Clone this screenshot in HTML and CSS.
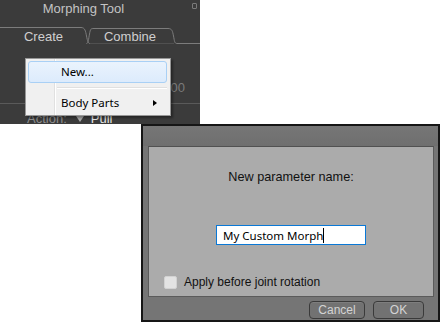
FILE: index.html
```html
<!DOCTYPE html>
<html lang="en">

<head>
    <meta charset="UTF-8" />
    <title>Morphing Tool</title>
    <link rel="stylesheet" href="styles.css">
</head>

<body>
    <div class="panel">
        <div class="panel-head">
            Morphing Tool
            <span class="grip"></span>
        </div>
        <div class="tabs">
            <svg class="tab-lines" width="200" height="17" viewBox="0 0 200 17">
                <path d="M0 0.5 H81 C85 0.5 85.5 4 86.5 9 C87.5 14 88 16.5 90 16.5" />
                <path d="M86.5 16.5 C88.5 16.5 88.5 12 89.5 7 C90.5 2 90.5 1.5 94 1.5 H168 C172 1.5 172.5 4 173.5 9 C174.5 14 174.5 16.5 177 16.5 H200" />
                <path class="under" d="M90 16.5 H174" />
            </svg>
            <span class="tab tab-active">Create</span>
            <span class="tab">Combine</span>
        </div>
        <div class="panel-body">
            <div class="value-row">0.000</div>
            <div class="action-row">
                <span class="action-label">Action:</span>
                <span class="action-arrow"></span>
                <span class="action-value">Pull</span>
            </div>
        </div>

        <div class="menu">
            <div class="menu-item menu-item-hover">New...</div>
            <div class="menu-sep"></div>
            <div class="menu-item">Body Parts <span class="menu-arrow"></span></div>
        </div>
    </div>

    <div class="dialog">
        <div class="dialog-title"></div>
        <div class="dialog-body">
            <p class="prompt">New parameter name:</p>
            <div class="name-input">My Custom Morph<span class="caret"></span></div>
            <label class="check">
                <span class="check-box"></span>
                Apply before joint rotation
            </label>
        </div>
        <div class="dialog-buttons">
            <button class="btn btn-cancel">Cancel</button>
            <button class="btn btn-ok">OK</button>
        </div>
    </div>
</body>

</html>
```

FILE: styles.css
```css
html {
    -webkit-font-smoothing: antialiased;
    font-family: "Liberation Sans", Arial, sans-serif;
    box-sizing: border-box;
}

*,
*:before,
*:after {
    box-sizing: inherit;
}

body {
    margin: 0;
    background: #fff;
}

/* tool panel */
.panel {
    position: relative;
    width: 200px;
    height: 124px;
    background: #3b3b3b;
    color: #c4c4c4;
    font-size: 13px;
}

.panel-head {
    position: relative;
    height: 27px;
    line-height: 17px;
    padding-right: 33px;
    text-align: center;
}

.grip {
    position: absolute;
    right: 3px;
    top: 3px;
    width: 5px;
    height: 6px;
    border: 1px solid #7a7a7a;
    border-radius: 1px;
}

.tabs {
    position: relative;
    display: flex;
    height: 17px;
}

.tab-lines {
    position: absolute;
    left: 0;
    top: 0;
}

.tab-lines path {
    fill: none;
    stroke: #7c7c7c;
    stroke-width: 1;
}

.tab-lines .under {
    stroke: #505050;
}

.tab {
    position: relative;
    width: 86px;
    padding-top: 2px;
    line-height: 15px;
    text-align: center;
    color: #cfcfcf;
}

.tab-active {
    width: 87px;
}

.panel-body {
    padding-top: 36px;
}

.value-row {
    height: 24px;
    padding-right: 15px;
    text-align: right;
    color: #7a7a7a;
    line-height: 15px;
    border-bottom: 1px solid #5a5a5a;
}

.action-row {
    display: flex;
    align-items: center;
    padding: 7px 0 0 27px;
    line-height: 15px;
}

.action-label {
    color: #8e8e8e;
}

.action-arrow {
    width: 0;
    height: 0;
    margin: 1px 7px 0 9px;
    border-left: 4px solid transparent;
    border-right: 4px solid transparent;
    border-top: 6px solid #a8a8a8;
}

.action-value {
    color: #e4e4e4;
}

/* context menu */
.menu {
    position: absolute;
    left: 25px;
    top: 58px;
    width: 146px;
    height: 58px;
    padding: 2px 3px 2px 2px;
    background: #f0f0f0 linear-gradient(to right, transparent 28px, #e0e0e0 28px, #e0e0e0 29px, #fff 29px, #fff 30px, transparent 30px);
    border: 1px solid #979797;
    box-shadow: 2px 2px 2px rgba(0, 0, 0, 0.35);
    font-family: "Noto Sans", "Open Sans", sans-serif;
    font-size: 11.5px;
    color: #000;
}

.menu-item {
    position: relative;
    height: 22px;
    line-height: 20px;
    padding-left: 32px;
    border: 1px solid transparent;
    border-radius: 3px;
}

.menu-item-hover {
    background: linear-gradient(#eaf3fd, #dcebfc);
    border-color: #a9d0f5;
}

.menu-sep {
    height: 1px;
    margin: 4px 0 3px 29px;
    background: #e0e0e0;
    border-bottom: 1px solid #fff;
    box-sizing: content-box;
}

.menu-arrow {
    position: absolute;
    right: 9px;
    top: 7px;
    border-top: 3.5px solid transparent;
    border-bottom: 3.5px solid transparent;
    border-left: 4px solid #000;
}

/* dialog */
.dialog {
    display: flex;
    flex-direction: column;
    width: 299px;
    height: 198px;
    margin-left: 141px;
    background: #757575;
    border: 2px solid #161616;
    font-size: 13px;
}

.dialog-title {
    height: 20px;
    background: linear-gradient(#767676, #6f6f6f);
}

.dialog-body {
    height: 151px;
    margin: 0 4px 0 5px;
    background: #ababab;
    border: 1px solid #5b5b5b;
    border-top-color: #515151;
    color: #111;
}

.prompt {
    margin: 23px 0 0;
    font-size: 12.7px;
    line-height: 15px;
    text-align: center;
}

.name-input {
    display: flex;
    align-items: center;
    width: 150px;
    height: 20px;
    margin: 40px auto 0;
    padding-left: 6px;
    background: #fff;
    border: 1px solid #0a78d6;
    font-family: "Noto Sans", "Open Sans", sans-serif;
    font-size: 11.5px;
    color: #000;
}

.caret {
    width: 1px;
    height: 15px;
    background: #000;
}

.check {
    display: flex;
    align-items: center;
    margin: 30px 0 0 15px;
    font-size: 12px;
    line-height: 15px;
}

.check-box {
    width: 13px;
    height: 13px;
    margin-right: 7px;
    background: #e3e3e3;
    border: 1px solid #d2d2d2;
    border-radius: 2px;
}

.dialog-buttons {
    display: flex;
    justify-content: flex-end;
    gap: 8px;
    padding: 4px 14px 0 0;
}

.btn {
    height: 18px;
    padding: 0;
    background: #727272;
    border: 1px solid #3a3a3a;
    border-radius: 4px;
    box-shadow: inset 0 1px 0 #7e7e7e;
    color: #d4d4d4;
    font-family: "Liberation Sans", Arial, sans-serif;
    font-size: 12px;
    outline: none;
}

.btn-cancel {
    width: 56px;
}

.btn-ok {
    width: 51px;
}
```
